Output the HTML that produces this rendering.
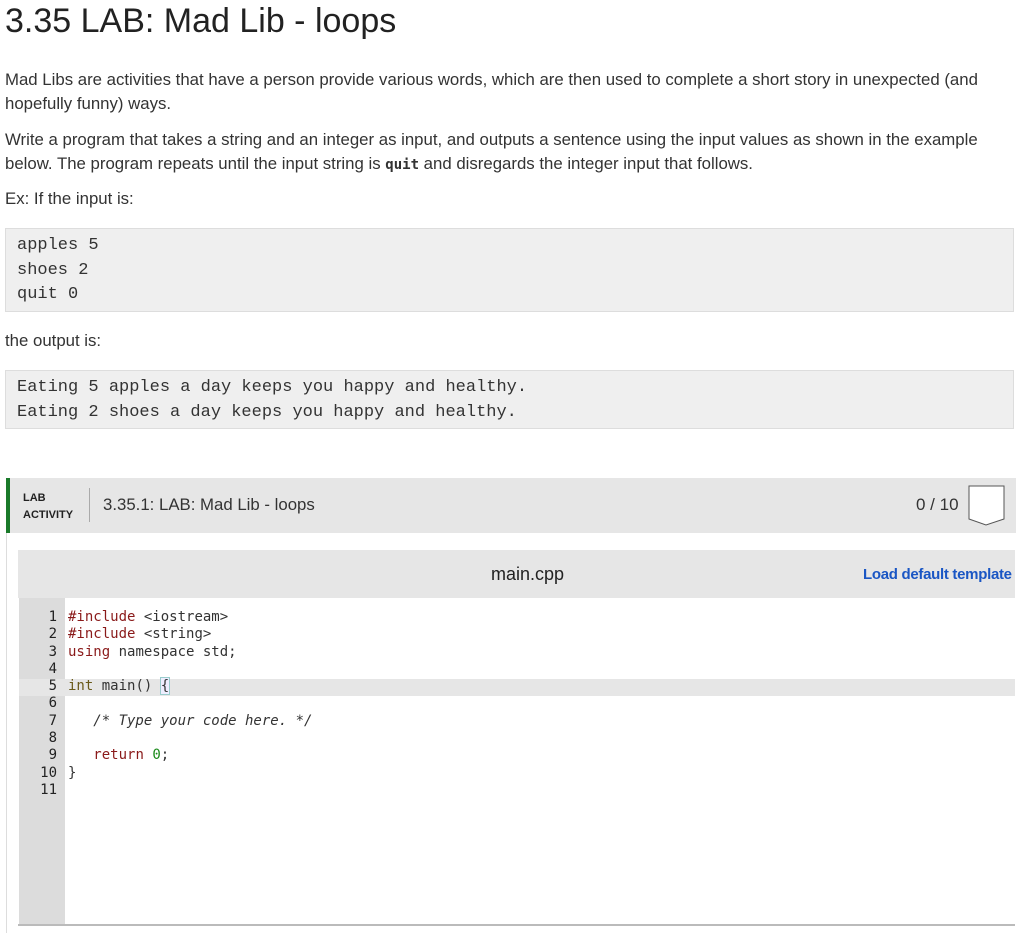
<!DOCTYPE html>
<html><head><style>
body{margin:0;width:1020px;height:933px;overflow:hidden;background:#fff;font-family:"Liberation Sans",sans-serif;color:#333;position:relative}
.a{position:absolute;white-space:nowrap}
p{margin:0}
.t{font-size:16.8px;color:#333;line-height:24px}
.box{position:absolute;left:5px;width:1007px;background:#efefef;border:1px solid #ddd;font-family:"Liberation Mono",monospace;font-size:17px;color:#333}
.mono{font-family:"DejaVu Sans Mono",monospace;font-size:14px;}
.ln{position:absolute;left:19px;width:38px;text-align:right;color:#222}
.cd{position:absolute;left:68px;color:#333}
</style></head><body>
<div class="a" style="left:5px;top:2px;font-size:34px;color:#222">3.35 LAB: Mad Lib - loops</div>
<div class="a t" style="left:5px;top:68px;white-space:normal;width:1000px">Mad Libs are activities that have a person provide various words, which are then used to complete a short story in unexpected (and hopefully funny) ways.</div>
<div class="a t" style="left:5px;top:128px;white-space:normal;width:1000px">Write a program that takes a string and an integer as input, and outputs a sentence using the input values as shown in the example below. The program repeats until the input string is <b style="font-family:'DejaVu Sans Mono',monospace;font-size:14px">quit</b> and disregards the integer input that follows.</div>
<div class="a t" style="left:5px;top:187px">Ex: If the input is:</div>
<div class="box" style="top:228px;height:82px"><div style="position:absolute;left:11px;top:5px;line-height:24.5px">apples 5<br>shoes 2<br>quit 0</div></div>
<div class="a t" style="left:5px;top:329px">the output is:</div>
<div class="box" style="top:370px;height:57px"><div style="position:absolute;left:11px;top:4px;line-height:25px">Eating 5 apples a day keeps you happy and healthy.<br>Eating 2 shoes a day keeps you happy and healthy.</div></div>

<div class="a" style="left:6px;top:533px;width:1px;height:400px;background:#ddd"></div>
<div class="a" style="left:6px;top:478px;width:1010px;height:55px;background:#e6e6e6"></div>
<div class="a" style="left:6px;top:478px;width:4px;height:55px;background:#1a7a2a"></div>
<div class="a" style="left:23px;top:490px;font-size:11px;font-weight:bold;color:#222;line-height:17px">LAB<br>ACTIVITY</div>
<div class="a" style="left:89px;top:488px;width:1px;height:34px;background:#aaa"></div>
<div class="a" style="left:103px;top:495px;font-size:16.8px;color:#333">3.35.1: LAB: Mad Lib - loops</div>
<div class="a" style="left:916px;top:495px;font-size:17px;color:#333">0 / 10</div>
<svg class="a" style="left:968px;top:485px" width="38" height="42"><path d="M1 1H36V34L18 40L1 34Z" fill="#fff" stroke="#555" stroke-width="1"/></svg>

<div class="a" style="left:18px;top:550px;width:997px;height:48px;background:#e6e6e6"></div>
<div class="a" style="left:491px;top:564px;font-size:18px;color:#222">main.cpp</div>
<div class="a" style="left:863px;top:566px;font-size:15px;font-weight:bold;color:#1a56c4;letter-spacing:-0.3px">Load default template</div>
<div class="a" style="left:18px;top:598px;width:997px;height:326px;border-bottom:2px solid #bbb"></div>
<div class="a" style="left:19px;top:598px;width:46px;height:326px;background:#dcdcdc"></div>
<div class="a" style="left:19px;top:679px;width:996px;height:17px;background:#e6e6e6"></div>
<div class="a mono" style="left:0;top:609px;line-height:17.3px;width:600px">
<div style="position:relative;height:17.3px"><span class="ln">1</span><span class="cd"><span style="color:#8a1a1a">#include</span> &lt;iostream&gt;</span></div>
<div style="position:relative;height:17.3px"><span class="ln">2</span><span class="cd"><span style="color:#8a1a1a">#include</span> &lt;string&gt;</span></div>
<div style="position:relative;height:17.3px"><span class="ln">3</span><span class="cd"><span style="color:#8a1a1a">using</span> namespace std;</span></div>
<div style="position:relative;height:17.3px"><span class="ln">4</span></div>
<div style="position:relative;height:17.3px"><span class="ln">5</span><span class="cd"><span style="color:#6a5a1a">int</span> main() <span style="outline:1px solid #9cc;background:#eef">{</span></span></div>
<div style="position:relative;height:17.3px"><span class="ln">6</span></div>
<div style="position:relative;height:17.3px"><span class="ln">7</span><span class="cd" style="font-style:italic">&nbsp;&nbsp;&nbsp;/* Type your code here. */</span></div>
<div style="position:relative;height:17.3px"><span class="ln">8</span></div>
<div style="position:relative;height:17.3px"><span class="ln">9</span><span class="cd">&nbsp;&nbsp;&nbsp;<span style="color:#8a1a1a">return</span> <span style="color:#1a8a1a">0</span>;</span></div>
<div style="position:relative;height:17.3px"><span class="ln">10</span><span class="cd">}</span></div>
<div style="position:relative;height:17.3px"><span class="ln">11</span></div>
</div>
</body></html>
